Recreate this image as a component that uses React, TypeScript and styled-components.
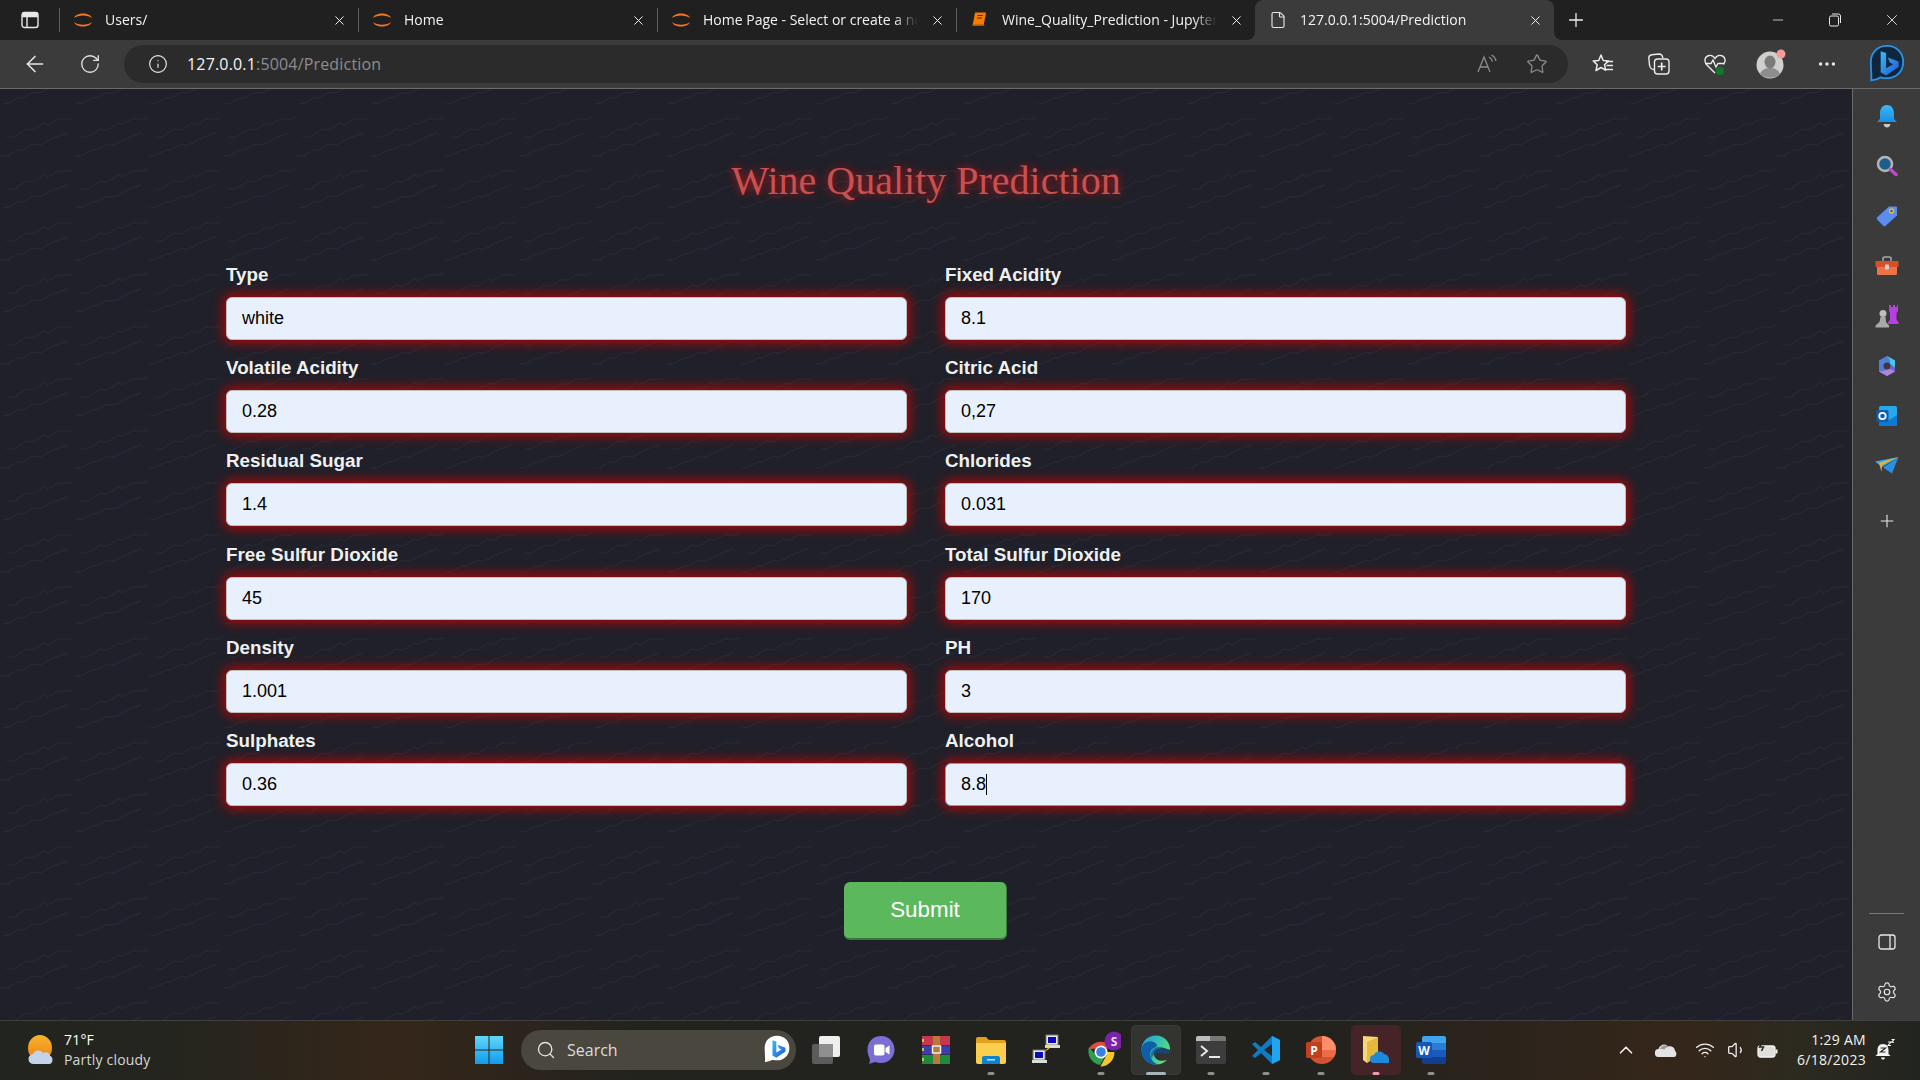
import React, { FC, ReactNode } from "react";
import styled, { createGlobalStyle } from "styled-components";
import {
  ArrowLeft,
  ChevronUp,
  File,
  Info,
  Minus,
  MoreHorizontal,
  Plus,
  RotateCw,
  Search,
  Settings,
  Star,
  Volume1,
  Wifi,
  X,
} from "lucide-react";

const waveTile = encodeURIComponent(
  `<svg xmlns="http://www.w3.org/2000/svg" width="74" height="52"><g fill="none" stroke="#292a35" stroke-width="1" stroke-linecap="round"><path d="M7 48 Q13 49 17 46 T26 40 Q31 42 35 40 T44 34 Q49 37 53 33 T63 30 T73 29"/><path d="M2 15 Q8 15 11 13 T18 9 Q24 10 28 6 T37 4 Q42 4 46 1 T56 -4 T67 -8"/><path d="M2 67 Q8 67 11 65 T18 61 Q24 62 28 58 T37 56 Q42 56 46 53 T56 48 T67 44"/></g></svg>`
);

const GlobalStyle = createGlobalStyle`
  html, body {
    margin: 0;
    padding: 0;
    background: #1f2029;
  }
  * {
    box-sizing: border-box;
  }
`;

const Screen = styled.div`
  width: 1920px;
  height: 1080px;
  display: flex;
  flex-direction: column;
  overflow: hidden;
  font-family: "Open Sans", "Noto Sans", sans-serif;
  color: #fff;
`;

/* ---- tab strip ---- */

const TabStrip = styled.div`
  height: 40px;
  flex: none;
  display: flex;
  background: #3b3b3b;
`;

const LeftGroup = styled.div`
  display: flex;
  align-items: center;
  background: #202020;
  border-bottom-right-radius: 8px;
`;

const TabsButton = styled.div`
  width: 59px;
  display: flex;
  justify-content: center;
`;

const ActiveShell = styled.div`
  background: #202020;
`;

const RightGroup = styled.div`
  flex: 1;
  display: flex;
  align-items: center;
  background: #202020;
  border-bottom-left-radius: 8px;
`;

const TabDivider = styled.div`
  width: 1px;
  height: 24px;
  background: #5f5f5f;
`;

const Tab = styled.div<{ $active?: boolean }>`
  width: ${(p) => (p.$active ? "299px" : "298px")};
  height: 40px;
  display: flex;
  align-items: center;
  padding: 0 11px 0 13px;
  background: ${(p) => (p.$active ? "#3b3b3b" : "transparent")};
  border-radius: 8px 8px 0 0;
`;

const TabIcon = styled.div`
  width: 20px;
  height: 20px;
  flex: none;
  display: flex;
  align-items: center;
  justify-content: center;
  margin-right: 12px;
`;

const TabTitle = styled.div`
  flex: 1;
  min-width: 0;
  overflow: hidden;
  white-space: nowrap;
  font-size: 14px;
  line-height: 20px;
  color: #f2f2f2;
  mask-image: linear-gradient(to left, transparent 0, #000 24px);
  margin-right: 12px;
`;

const NewTab = styled.div`
  width: 44px;
  display: flex;
  justify-content: center;
`;

const WindowControls = styled.div`
  margin-left: auto;
  display: flex;
`;

const WindowButton = styled.div`
  width: 57px;
  height: 40px;
  display: flex;
  align-items: center;
  justify-content: center;
`;

/* ---- toolbar ---- */

const Toolbar = styled.div`
  height: 49px;
  flex: none;
  display: flex;
  align-items: flex-start;
  padding: 5px 0 0 12px;
  background: #3b3b3b;
  border-bottom: 1px solid #6a6a6a;
`;

const NavButton = styled.div`
  width: 45px;
  height: 38px;
  margin-right: 10px;
  display: flex;
  align-items: center;
  justify-content: center;
  flex: none;
`;

const AddressBar = styled.div`
  width: 1444px;
  height: 38px;
  margin-left: 2px;
  flex: none;
  display: flex;
  align-items: center;
  padding: 0 20px 0 24px;
  background: #2b2b2b;
  border-radius: 19px;
`;

const Url = styled.div`
  margin-left: 19px;
  font-size: 16px;
  letter-spacing: 0.17px;
  color: #f4f4f4;
  span {
    color: #8d8d8d;
  }
`;

const AddressActions = styled.div`
  margin-left: auto;
  display: flex;
  align-items: center;
  gap: 28px;
`;

const ToolGroup = styled.div`
  margin-left: 7px;
  display: flex;
`;

const ToolButton = styled.div`
  width: 56px;
  height: 38px;
  display: flex;
  align-items: center;
  justify-content: center;
`;

const BingSlot = styled(ToolButton)`
  margin-left: 4px;
`;

/* ---- page ---- */

const Middle = styled.div`
  flex: 1;
  min-height: 0;
  display: flex;
`;

const Page = styled.main`
  flex: 1;
  min-width: 0;
  padding: 69px 226px 0;
  background-color: #1f2029;
  background-image: url("data:image/svg+xml,${waveTile}");
  background-size: 74px 52px;
`;

const Title = styled.h1`
  margin: 0 0 60px;
  font-family: "Liberation Serif", serif;
  font-size: 40px;
  line-height: 45px;
  padding-bottom: 1px;
  font-weight: 400;
  text-align: center;
  color: #c85050;
  text-shadow: 0 0 10px rgba(215, 20, 20, 0.9);
`;

const FormGrid = styled.form`
  display: grid;
  grid-template-columns: 681px 681px;
  column-gap: 38px;
  row-gap: 17.2px;
`;

const Field = styled.div`
  display: flex;
  flex-direction: column;
`;

const Label = styled.label`
  height: 22px;
  margin-bottom: 11px;
  font-family: "Liberation Sans", Arial, sans-serif;
  font-size: 18.8px;
  line-height: 22px;
  font-weight: 700;
  color: #f0f0f0;
`;

const InputWrap = styled.div`
  position: relative;
`;

const Input = styled.input<{ $focused?: boolean }>`
  display: block;
  width: 100%;
  height: 43px;
  padding: 0 15px;
  font-family: "Liberation Sans", Arial, sans-serif;
  font-size: 18px;
  color: #000;
  background: #e8f0fe;
  border: 1px solid ${(p) => (p.$focused ? "#6f9fd8" : "#bdbdbd")};
  border-radius: 6px;
  outline: none;
  caret-color: transparent;
  box-shadow: 0 0 12px 3px rgba(205, 0, 0, 0.8);
`;

const Caret = styled.span`
  position: absolute;
  left: 41px;
  top: 11px;
  width: 1px;
  height: 21px;
  background: #000;
`;

const SubmitRow = styled.div`
  margin-top: 76px;
  display: flex;
  justify-content: center;
`;

const SubmitButton = styled.button`
  width: 163px;
  height: 58px;
  margin-right: 1px;
  font-family: "Liberation Sans", Arial, sans-serif;
  font-size: 22.4px;
  color: #fff;
  background: #5cb85c;
  border: none;
  border-right: 1px solid #3e7f3e;
  border-bottom: 2px solid #3a773a;
  border-radius: 6px;
`;

/* ---- edge sidebar ---- */

const Sidebar = styled.aside`
  width: 68px;
  flex: none;
  display: flex;
  flex-direction: column;
  align-items: center;
  padding-top: 2px;
  background: #3b3b3b;
  border-left: 1px solid #6a6a6a;
`;

const SideItem = styled.div`
  width: 100%;
  height: 50px;
  display: flex;
  align-items: center;
  justify-content: center;
`;

const SideAdd = styled(SideItem)`
  margin-top: 5px;
`;

const SideFooter = styled.div`
  margin-top: auto;
  width: 100%;
  display: flex;
  flex-direction: column;
  align-items: center;
  padding-bottom: 3px;
`;

const SideRule = styled.div`
  width: 35px;
  height: 1px;
  margin-bottom: 3px;
  background: #777;
`;

/* ---- taskbar ---- */

const Taskbar = styled.footer`
  height: 60px;
  flex: none;
  display: flex;
  align-items: center;
  padding-bottom: 2px;
  border-top: 1px solid #3f3f3f;
  background: linear-gradient(
    90deg,
    #22241f 0,
    #25251e 180px,
    #35261a 390px,
    #23231e 640px,
    #21221e 1300px,
    #35261a 1680px,
    #2c2a20 1800px,
    #22241f 1920px
  );
`;

const Weather = styled.div`
  width: 461px;
  flex: none;
  display: flex;
  align-items: center;
  gap: 9px;
  padding-left: 27px;
`;

const WeatherText = styled.div`
  font-size: 14px;
  line-height: 20px;
  letter-spacing: 0.2px;
  div + div {
    color: #d6d6d6;
  }
`;

const SearchPill = styled.div`
  width: 275px;
  height: 40px;
  margin: 0 2px 0 5px;
  flex: none;
  display: flex;
  align-items: center;
  padding: 0 6px 0 15px;
  background: #4a473f;
  border-radius: 20px;
  font-size: 16px;
  color: #dcdcdc;
`;

const SearchLabel = styled.span`
  margin-left: 11px;
  margin-right: auto;
`;

const Slot = styled.div<{ $active?: boolean; $tone?: string }>`
  position: relative;
  width: 50px;
  height: 50px;
  margin: 0 2.5px;
  flex: none;
  display: flex;
  align-items: center;
  justify-content: center;
  border-radius: 5px;
  background: ${(p) => p.$tone ?? "transparent"};
  ${(p) => p.$active && "box-shadow: inset 0 0 0 1px #3a3b37;"}
`;

const Pip = styled.span<{ $wide?: boolean; $pink?: boolean }>`
  position: absolute;
  bottom: 0;
  left: 50%;
  transform: translateX(-50%);
  width: ${(p) => (p.$wide ? "20px" : "7px")};
  height: 3px;
  border-radius: 2px;
  background: ${(p) => (p.$pink ? "#f29aa6" : p.$wide ? "#a6b4b8" : "#8f8f8f")};
`;

const Tray = styled.div`
  margin-left: auto;
  display: flex;
  align-items: center;
`;

const TrayIcon = styled.div<{ $w: number }>`
  width: ${(p) => p.$w}px;
  display: flex;
  justify-content: center;
`;

const Clock = styled.div`
  width: 80px;
  text-align: right;
  font-size: 14px;
  line-height: 20px;
  color: #f2f2f2;
  letter-spacing: 0.3px;
`;

const BellWrap = styled.div`
  width: 54px;
  padding-right: 16px;
  display: flex;
  justify-content: center;
`;

/* ---- drawn icons ---- */

const JupyterIcon: FC = () => (
  <svg width="20" height="20" viewBox="0 0 20 20">
    <path d="M1 8 C3 2 17 2 19 8 C15 4.5 5 4.5 1 8Z" fill="#f37726" />
    <path d="M1 12 C3 18 17 18 19 12 C15 15.5 5 15.5 1 12Z" fill="#f37726" />
  </svg>
);

const NotebookIcon: FC = () => (
  <svg width="18" height="18" viewBox="0 0 18 18">
    <path d="M4 1.5h11l-2.5 13.5H1.5z" fill="#f57c00" />
    <path d="M2 15h11l.5-1.5h-11z" fill="#a85400" />
    <path d="M6.5 4.5h5.5M6 7h5" stroke="#5a2c00" strokeWidth="1" />
  </svg>
);

const TabsIcon: FC = () => (
  <svg width="18" height="18" viewBox="0 0 18 18" fill="none" stroke="#e8e8e8" strokeWidth="1.4">
    <rect x="1" y="1.5" width="16" height="15" rx="2.5" />
    <path d="M1.5 5.5h15M6 5.5v10.5" />
    <path d="M2 2.2h14v3H2z" fill="#e8e8e8" />
  </svg>
);

const RestoreIcon: FC = () => (
  <svg width="14" height="14" viewBox="0 0 14 14" fill="none" stroke="#e8e8e8" strokeWidth="1">
    <rect x="1.5" y="3" width="9" height="10" rx="1.5" />
    <path d="M4 1h6.5A2 2 0 0 1 12.5 3v7" />
  </svg>
);

const ReadAloudIcon: FC = () => (
  <svg width="22" height="22" viewBox="0 0 22 22" fill="none" stroke="#8c8c8c" strokeWidth="1.3">
    <path d="M2 19 L8 4 L14 19M4 14h8" />
    <path d="M13 4c2 1 3 2.5 3.5 4.5M15.5 2c2.5 1.2 4 3.5 4.5 6" />
  </svg>
);

const FavListIcon: FC = () => (
  <svg width="24" height="24" viewBox="0 0 24 24" fill="none" stroke="#ececec" strokeWidth="1.5">
    <path d="M10 3l2.2 5.5 5.3.4-4 3.8 1.2 5.5-4.7-2.7L5 18.5l1.2-5.8-4-3.8 5.5-.4z" strokeLinejoin="round" />
    <path d="M15 9.5h7M15.5 13.5h6.5M13 17.5h9" />
  </svg>
);

const CollectionsIcon: FC = () => (
  <svg width="24" height="24" viewBox="0 0 24 24" fill="none" stroke="#ececec" strokeWidth="1.4">
    <path d="M7 17.5C4 17.5 3 16 2.5 13L1.8 6c0-2 1-3 3-3.2L12 2c2.5 0 3.5 1.5 3.8 4" />
    <rect x="7.5" y="7" width="14.5" height="15" rx="3" />
    <path d="M14.7 10.5v8M10.7 14.5h8" strokeWidth="1.7" />
  </svg>
);

const HealthIcon: FC = () => (
  <svg width="24" height="24" viewBox="0 0 24 24" fill="none">
    <path
      d="M12 21L3.5 12.5C1 9.5 1.5 5.5 4.5 4c3-1.5 6 0 7.5 2.5C13.5 4 16.5 2.5 19.5 4c3 1.5 3.5 5.5 1 8.5"
      stroke="#ececec"
      strokeWidth="1.4"
    />
    <path d="M2 11.5h6l2-3.5 3 7 2-3.5h6" stroke="#ececec" strokeWidth="1.4" />
    <circle cx="17" cy="19" r="4" fill="#0f7b2a" />
  </svg>
);

const AvatarIcon: FC = () => (
  <svg width="30" height="30" viewBox="0 0 30 30">
    <circle cx="14" cy="16" r="13.5" fill="#cfcfcc" />
    <ellipse cx="14" cy="13" rx="5.5" ry="6.5" fill="#7b7b7b" />
    <path d="M4 25c2-5 6-6 10-6s8 1 10 6c-5 5-15 5-20 0z" fill="#8d8d8d" />
    <circle cx="25" cy="5" r="4.5" fill="#f79a9a" />
  </svg>
);

const BingMark: FC<{ size: number }> = ({ size }) => (
  <svg width={size} height={size * 1.1} viewBox="0 0 40 44">
    <defs>
      <linearGradient id={`bing${size}`} x1="0" y1="0" x2="1" y2="1">
        <stop offset="0" stopColor="#37bdf2" />
        <stop offset="1" stopColor="#2456d8" />
      </linearGradient>
    </defs>
    <path
      d="M20 2C9 2 2 10 2 20c0 6 1 13 .5 20.5C8 40 11 38.5 13 37c2 .7 4.5 1 7 1 11 0 18-8 18-18S31 2 20 2z"
      fill={size > 26 ? "#10263c" : "#fff"}
      stroke={size > 26 ? "#2a93e6" : "#fff"}
      strokeWidth="2"
    />
    <path
      d="M13 8l6 2v17l8-4.5-4-2-2-5.5 12 4.5v6L19 35l-6-3.5z"
      fill={`url(#bing${size})`}
    />
  </svg>
);

const BellIcon: FC = () => (
  <svg width="24" height="26" viewBox="0 0 24 26">
    <defs>
      <linearGradient id="bell" x1="0" y1="0" x2="0" y2="1">
        <stop offset="0" stopColor="#3bb8f5" />
        <stop offset="1" stopColor="#1a8fe3" />
      </linearGradient>
    </defs>
    <path d="M12 2c5 0 7 4 7 9v5l3 3H2l3-3v-5c0-5 2-9 7-9z" fill="url(#bell)" />
    <path d="M8.5 21h7c-.5 2.5-2 3.5-3.5 3.5S9 23.5 8.5 21z" fill="#c9c9c9" />
  </svg>
);

const DiscoverIcon: FC = () => (
  <svg width="22" height="22" viewBox="0 0 22 22">
    <circle cx="9" cy="9" r="7" fill="#1f5d8a" stroke="#b4b4b4" strokeWidth="2.5" />
    <path d="M14.5 14.5l5.5 5" stroke="#c644d8" strokeWidth="3.5" strokeLinecap="round" />
  </svg>
);

const TagIcon: FC = () => (
  <svg width="22" height="22" viewBox="0 0 22 22">
    <path d="M13 1.5h7a1 1 0 0 1 1 1v8L10 20.5a2 2 0 0 1-3 0L1.5 15a2 2 0 0 1 0-3z" fill="#5b8cf0" />
    <circle cx="15.5" cy="6" r="2" fill="#3b5bb0" stroke="#f2c21a" strokeWidth="1.3" />
  </svg>
);

const ToolboxIcon: FC = () => (
  <svg width="24" height="20" viewBox="0 0 24 20">
    <path d="M8 5V2.5C8 1.5 9 1 10 1h4c1 0 2 .5 2 1.5V5" fill="none" stroke="#a9a9a9" strokeWidth="1.5" />
    <rect x="0.5" y="5" width="23" height="6" fill="#d64f26" />
    <path d="M2 11h20v6.5a1.5 1.5 0 0 1-1.5 1.5h-17A1.5 1.5 0 0 1 2 17.5z" fill="#ea7448" />
    <rect x="10" y="8.5" width="4" height="5" rx="1" fill="#cfcfcf" />
  </svg>
);

const GamesIcon: FC = () => (
  <svg width="24" height="24" viewBox="0 0 24 24">
    <path d="M14 1h2v2h2V1h2v2h2V1h1v6l-1.5 2v7l2 2v2H13v-2l2-2V9l-1-2z" fill="#b640e6" />
    <circle cx="8" cy="9.5" r="3.5" fill="#bdbdbd" />
    <path d="M5.5 13h5l.5 5 3 3.5v2H0.5v-2l4-3.5z" fill="#a9a9a9" />
  </svg>
);

const CopilotIcon: FC = () => (
  <svg width="22" height="22" viewBox="0 0 22 22">
    <defs>
      <linearGradient id="m365a" x1="0" y1="0" x2="1" y2="1">
        <stop offset="0" stopColor="#3e8fe0" />
        <stop offset="1" stopColor="#7a56c8" />
      </linearGradient>
    </defs>
    <path d="M11 1l8 4.5v11L11 21l-8-4.5v-11z" fill="url(#m365a)" />
    <path d="M11 1l8 4.5v7l-5-3.5V5z" fill="#45c8ea" />
    <path d="M3 16.5l8 4.5 8-4.5-6-3-5 2.5z" fill="#b084dc" />
    <circle cx="11" cy="11" r="3.5" fill="#3b3b3b" />
  </svg>
);

const OutlookIcon: FC = () => (
  <svg width="22" height="22" viewBox="0 0 22 22">
    <rect x="3" y="1" width="18" height="20" rx="1.5" fill="#28a8ea" />
    <path d="M3 11l9 5 9-6v10a1 1 0 0 1-1 1H4a1 1 0 0 1-1-1z" fill="#0f78d4" />
    <rect x="0.5" y="5" width="12" height="12" rx="1.5" fill="#0a5fb0" />
    <circle cx="6.5" cy="11" r="3.2" fill="none" stroke="#fff" strokeWidth="1.8" />
  </svg>
);

const SendIcon: FC = () => (
  <svg width="24" height="18" viewBox="0 0 24 18">
    <path d="M0 4.5L23.5 0 7 10z" fill="#38aef0" />
    <path d="M23.5 0L17 16.5l-9-6z" fill="#2b8fe0" />
    <path d="M4 6L23.5 0 7 8l-.5 7z" fill="#f4b020" />
  </svg>
);

const PanelIcon: FC = () => (
  <svg width="18" height="16" viewBox="0 0 18 16" fill="none" stroke="#e8e8e8" strokeWidth="1.3">
    <rect x="1" y="1" width="16" height="14" rx="2.5" />
    <path d="M12 1v14" />
  </svg>
);

const WeatherIcon: FC = () => (
  <svg width="28" height="30" viewBox="0 0 28 30">
    <defs>
      <linearGradient id="sun" x1="0" y1="0" x2="0" y2="1">
        <stop offset="0" stopColor="#f7b52b" />
        <stop offset="1" stopColor="#ee7f16" />
      </linearGradient>
    </defs>
    <ellipse cx="13" cy="13" rx="12" ry="13" fill="url(#sun)" />
    <path d="M7 29a5 5 0 0 1-1-10c1-4 8-5 10-1 3-2 7 0 7 3 3 0 4 8-1 8z" fill="#c3d4ea" />
  </svg>
);

const WindowsIcon: FC = () => (
  <svg width="30" height="30" viewBox="0 0 30 30">
    <defs>
      <linearGradient id="win" x1="0" y1="0" x2="0" y2="1">
        <stop offset="0" stopColor="#62d6f6" />
        <stop offset="1" stopColor="#0f9cf0" />
      </linearGradient>
    </defs>
    <path d="M1 1h13.5v13.5H1zM15.5 1H29v13.5H15.5zM1 15.5h13.5V29H1zM15.5 15.5H29V29H15.5z" fill="url(#win)" />
  </svg>
);

const TaskViewIcon: FC = () => (
  <svg width="30" height="30" viewBox="0 0 30 30">
    <rect x="1" y="9" width="21" height="20" rx="2" fill="#5c5c5c" />
    <rect x="8" y="1" width="21" height="21" rx="2" fill="#efefef" />
    <rect x="8" y="9" width="14" height="13" fill="#8f8f8f" />
  </svg>
);

const ChatIcon: FC = () => (
  <svg width="30" height="30" viewBox="0 0 30 30">
    <path d="M15 1c8 0 13.5 6 13.5 13.5S23 28 15 28c-2 0-4-.5-6-1l-6 2c1-2 1.5-4 0-7-1-2-1.5-5-1.5-7.5C1.5 7 7 1 15 1z" fill="#7b6fd6" />
    <rect x="8" y="9.5" width="10.5" height="11" rx="2" fill="#fff" />
    <path d="M19.5 13l4-2.5v9l-4-2.5z" fill="#fff" />
  </svg>
);

const RarIcon: FC = () => (
  <svg width="30" height="30" viewBox="0 0 30 30">
    <rect x="1" y="1" width="28" height="9" fill="#c43a4a" />
    <rect x="1" y="10.5" width="28" height="9" fill="#3d3fa8" />
    <rect x="1" y="20" width="28" height="9" fill="#1f8a3a" />
    <rect x="12" y="1" width="7" height="28" fill="#b87a3a" />
    <rect x="11.5" y="11" width="8" height="7" fill="none" stroke="#eee" strokeWidth="1.5" />
    <path d="M2 4v3M2 13v3M2 23v3" stroke="#f2d65c" strokeWidth="1.5" />
  </svg>
);

const FolderIcon: FC = () => (
  <svg width="30" height="28" viewBox="0 0 30 28">
    <path d="M0 3a2 2 0 0 1 2-2h8l3 3h15a2 2 0 0 1 2 2v4H0z" fill="#e0a21c" />
    <path d="M0 7h30v19a2 2 0 0 1-2 2H2a2 2 0 0 1-2-2z" fill="#fbcf4e" />
    <path d="M8 20h14a2 2 0 0 1 2 2v6H6v-6a2 2 0 0 1 2-2z" fill="#0f82cf" />
    <rect x="11" y="23" width="8" height="1.5" fill="#bfe4fa" />
  </svg>
);

const PuttyIcon: FC = () => (
  <svg width="30" height="32" viewBox="0 0 30 32">
    <rect x="15" y="1" width="12" height="10" fill="#e8e8e8" stroke="#777" />
    <rect x="17" y="3" width="8" height="6" fill="#0a0ab8" />
    <rect x="14" y="11" width="15" height="3" fill="#dcdcdc" />
    <rect x="2" y="16" width="12" height="10" fill="#e8e8e8" stroke="#777" />
    <rect x="4" y="18" width="8" height="6" fill="#0a0ab8" />
    <rect x="1" y="26" width="15" height="3" fill="#dcdcdc" />
    <path d="M19 9l-5 5 3 0-6 6 9-7-3 0 3-4z" fill="#f5e11e" />
  </svg>
);

const ChromeIcon: FC = () => (
  <svg width="40" height="38" viewBox="-4 0 40 38">
    <path d="M3.7 14A14 14 0 0 1 28 13.5H16z" fill="#e24a3b" transform="translate(0 4)" />
    <path d="M29.4 18a14 14 0 0 1-14 14.5l6-11-1.5-3.5z" fill="#f7c52d" transform="translate(0 3)" />
    <path d="M4 16a14 14 0 0 0 11 18l6-10-10 0z" fill="#2e9e50" />
    <circle cx="16" cy="21" r="6.5" fill="#fff" />
    <circle cx="16" cy="21" r="4.8" fill="#3b7ee8" />
    <circle cx="29" cy="10" r="9.5" fill="#7a22a8" />
    <text x="29" y="14.5" fontSize="12" fontWeight="700" textAnchor="middle" fill="#e9d8f5" fontFamily="Open Sans, sans-serif">S</text>
  </svg>
);

const EdgeIcon: FC = () => (
  <svg width="30" height="30" viewBox="0 0 30 30">
    <defs>
      <linearGradient id="edgeA" x1="0" y1="0" x2="1" y2="0.6">
        <stop offset="0" stopColor="#1f9be0" />
        <stop offset="0.6" stopColor="#38c7a6" />
        <stop offset="1" stopColor="#6fdc6a" />
      </linearGradient>
    </defs>
    <path d="M15 .5C6 .5.5 7 .5 15c0 8 6 14.5 14.5 14.5 4 0 8-1.5 11-4.5-6 2-12 0-13-5-1-4 3-7 8-7 4 0 8 2 8 2C29.5 7 23 .5 15 .5z" fill="url(#edgeA)" />
    <path d="M.5 15C1 8 7 5.5 11 6.5c4 1 6 4 4.5 5-5 2-7 5-6 10 1 4 4 7 8 8C8 31 0 24 .5 15z" fill="#0e5fa8" />
    <path d="M11 24c-3-6 1-12 7-12 5 0 8 2 11 5 0 2-2 2-4 2-6-2-14-1-14 5z" fill="#0b4f8e" opacity="0.7" />
  </svg>
);

const TerminalIcon: FC = () => (
  <svg width="30" height="28" viewBox="0 0 30 28">
    <rect width="30" height="28" rx="2" fill="#3d3d3d" />
    <path d="M0 2a2 2 0 0 1 2-2h12v5H0z" fill="#bdbdbd" />
    <path d="M14 0h14a2 2 0 0 1 2 2v3H14z" fill="#777" />
    <path d="M5 10l6 5-6 5" fill="none" stroke="#e8e8e8" strokeWidth="2" />
    <path d="M13 21h11" stroke="#e8e8e8" strokeWidth="2" />
  </svg>
);

const VsCodeIcon: FC = () => (
  <svg width="30" height="30" viewBox="0 0 30 30">
    <path d="M21 1l8 4v20l-8 4-11-11-6 5-3-2 6-6-6-6 3-2 6 5z" fill="#0f7ac6" />
    <path d="M21 1l8 4v20l-8 4z" fill="#22a5f0" />
    <path d="M21 9l-8 6 8 6z" fill="#272822" />
  </svg>
);

const PowerPointIcon: FC = () => (
  <svg width="30" height="30" viewBox="0 0 30 30">
    <circle cx="16" cy="15" r="14" fill="#d35230" />
    <path d="M16 1a14 14 0 0 1 14 14H16z" fill="#ff8f6b" />
    <path d="M16 15h14a14 14 0 0 1-2 7H16z" fill="#ed6c47" />
    <rect x="0" y="7" width="16" height="16" rx="1.5" fill="#c43e1c" />
    <text x="8" y="20" fontSize="12" fontWeight="700" textAnchor="middle" fill="#fff" fontFamily="Open Sans, sans-serif">P</text>
  </svg>
);

const OneDriveFolderIcon: FC = () => (
  <svg width="28" height="30" viewBox="0 0 28 30">
    <path d="M1 1l15 1v18L5 28 1 25z" fill="#f5d77a" />
    <path d="M5 7l11-5v18L5 28z" fill="#e6b93c" />
    <path d="M12 28a4 4 0 0 1 0-8c1-4 8-5 10-1 3 0 6 3 5 9z" fill="#1c8ad8" />
  </svg>
);

const WordIcon: FC = () => (
  <svg width="30" height="28" viewBox="0 0 30 28">
    <path d="M8 0h20a2 2 0 0 1 2 2v5H6V2a2 2 0 0 1 2-2z" fill="#41a5ee" />
    <rect x="6" y="7" width="24" height="7" fill="#2b7cd3" />
    <rect x="6" y="14" width="24" height="7" fill="#185abd" />
    <path d="M6 21h24v5a2 2 0 0 1-2 2H8a2 2 0 0 1-2-2z" fill="#103f91" />
    <rect x="0" y="6" width="16" height="16" rx="1.5" fill="#1358b8" />
    <text x="8" y="19" fontSize="12" fontWeight="700" textAnchor="middle" fill="#fff" fontFamily="Open Sans, sans-serif">W</text>
  </svg>
);

const OneDriveTray: FC = () => (
  <svg width="22" height="14" viewBox="0 0 22 14">
    <path d="M4 14a4 4 0 0 1-.5-8C5 1 11 0 13 3.5 17 2.5 20 5 20 8c2 1 2 6-1 6z" fill="#e4e4e4" />
    <path d="M5 6c1-4 7-5 8-2-2 .5-3 1.5-3.5 2.5C8 6 6.5 6 5 6z" fill="#9a9a9a" />
  </svg>
);

const BatteryIcon: FC = () => (
  <svg width="22" height="18" viewBox="0 0 22 18" fill="none" stroke="#f2f2f2" strokeWidth="1.3">
    <rect x="1" y="5" width="17" height="11" rx="2.5" fill="#f2f2f2" fillOpacity="0.9" />
    <path d="M19.5 8.5v4" strokeWidth="2" />
    <path d="M6 0L2.5 6h4L4.5 10" stroke="#2c241c" strokeWidth="1.5" />
  </svg>
);

const SnoozeBell: FC = () => (
  <svg width="20" height="22" viewBox="0 0 20 22">
    <path d="M8 5c4 0 5.5 3 5.5 6v4l2 2H.5l2-2v-4C2.5 8 4 5 8 5z" fill="#f4f4f4" />
    <path d="M6 18.5h4c-.3 1.5-1 2-2 2s-1.7-.5-2-2z" fill="#f4f4f4" />
    <path d="M5.5 9h5l-5 4h5" stroke="#2b2720" strokeWidth="1.2" fill="none" />
    <path d="M13 3h3l-3 3.5h3M16.5 .5h2.5l-2.5 2.7h2.5" stroke="#f4f4f4" strokeWidth="1.1" fill="none" />
  </svg>
);

/* ---- data ---- */

const tabs: { title: string; icon: ReactNode }[] = [
  { title: "Users/", icon: <JupyterIcon /> },
  { title: "Home", icon: <JupyterIcon /> },
  { title: "Home Page - Select or create a notebook", icon: <JupyterIcon /> },
  { title: "Wine_Quality_Prediction - Jupyter Notebook", icon: <NotebookIcon /> },
];

const fields = [
  ["Type", "white"],
  ["Fixed Acidity", "8.1"],
  ["Volatile Acidity", "0.28"],
  ["Citric Acid", "0,27"],
  ["Residual Sugar", "1.4"],
  ["Chlorides", "0.031"],
  ["Free Sulfur Dioxide", "45"],
  ["Total Sulfur Dioxide", "170"],
  ["Density", "1.001"],
  ["PH", "3"],
  ["Sulphates", "0.36"],
  ["Alcohol", "8.8"],
];

const sideIcons = [
  <BellIcon />,
  <DiscoverIcon />,
  <TagIcon />,
  <ToolboxIcon />,
  <GamesIcon />,
  <CopilotIcon />,
  <OutlookIcon />,
  <SendIcon />,
];

const apps: { icon: ReactNode; pip?: "dot" | "wide" | "pink"; active?: boolean; tone?: string }[] = [
  { icon: <TaskViewIcon /> },
  { icon: <ChatIcon /> },
  { icon: <RarIcon /> },
  { icon: <FolderIcon />, pip: "dot" },
  { icon: <PuttyIcon /> },
  { icon: <ChromeIcon />, pip: "dot" },
  { icon: <EdgeIcon />, pip: "wide", active: true, tone: "#33342f" },
  { icon: <TerminalIcon />, pip: "dot" },
  { icon: <VsCodeIcon />, pip: "dot" },
  { icon: <PowerPointIcon />, pip: "dot" },
  { icon: <OneDriveFolderIcon />, pip: "pink", tone: "#442426" },
  { icon: <WordIcon />, pip: "dot" },
];

const App: FC = () => {
  return (
    <Screen>
      <GlobalStyle />
      <TabStrip>
        <LeftGroup>
          <TabsButton>
            <TabsIcon />
          </TabsButton>
          {tabs.map((tab) => (
            <React.Fragment key={tab.title}>
              <TabDivider />
              <Tab>
                <TabIcon>{tab.icon}</TabIcon>
                <TabTitle>{tab.title}</TabTitle>
                <X size={15} color="#f0f0f0" strokeWidth={1.6} />
              </Tab>
            </React.Fragment>
          ))}
        </LeftGroup>
        <ActiveShell>
          <Tab $active>
            <TabIcon>
              <File size={18} color="#e8e8e8" strokeWidth={1.5} />
            </TabIcon>
            <TabTitle>127.0.0.1:5004/Prediction</TabTitle>
            <X size={15} color="#f0f0f0" strokeWidth={1.6} />
          </Tab>
        </ActiveShell>
        <RightGroup>
          <NewTab>
            <Plus size={22} color="#f0f0f0" strokeWidth={1.4} />
          </NewTab>
          <WindowControls>
            <WindowButton>
              <Minus size={16} color="#e8e8e8" strokeWidth={1.2} />
            </WindowButton>
            <WindowButton>
              <RestoreIcon />
            </WindowButton>
            <WindowButton>
              <X size={18} color="#e8e8e8" strokeWidth={1.2} />
            </WindowButton>
          </WindowControls>
        </RightGroup>
      </TabStrip>

      <Toolbar>
        <NavButton>
          <ArrowLeft size={26} color="#e8e8e8" strokeWidth={1.4} />
        </NavButton>
        <NavButton>
          <RotateCw size={22} color="#e8e8e8" strokeWidth={1.4} />
        </NavButton>
        <AddressBar>
          <Info size={20} color="#e8e8e8" strokeWidth={1.4} />
          <Url>
            127.0.0.1<span>:5004/Prediction</span>
          </Url>
          <AddressActions>
            <ReadAloudIcon />
            <Star size={22} color="#8c8c8c" strokeWidth={1.4} />
          </AddressActions>
        </AddressBar>
        <ToolGroup>
          <ToolButton>
            <FavListIcon />
          </ToolButton>
          <ToolButton>
            <CollectionsIcon />
          </ToolButton>
          <ToolButton>
            <HealthIcon />
          </ToolButton>
          <ToolButton>
            <AvatarIcon />
          </ToolButton>
          <ToolButton>
            <MoreHorizontal size={22} color="#e8e8e8" strokeWidth={1.8} />
          </ToolButton>
          <BingSlot>
            <BingMark size={36} />
          </BingSlot>
        </ToolGroup>
      </Toolbar>

      <Middle>
        <Page>
          <Title>Wine Quality Prediction</Title>
          <FormGrid onSubmit={(e) => e.preventDefault()}>
            {fields.map(([label, value], index) => (
              <Field key={label}>
                <Label htmlFor={`field-${index}`}>{label}</Label>
                <InputWrap>
                  <Input
                    id={`field-${index}`}
                    defaultValue={value}
                    $focused={label === "Alcohol"}
                  />
                  {label === "Alcohol" && <Caret />}
                </InputWrap>
              </Field>
            ))}
          </FormGrid>
          <SubmitRow>
            <SubmitButton type="button">Submit</SubmitButton>
          </SubmitRow>
        </Page>
        <Sidebar>
          {sideIcons.map((icon, index) => (
            <SideItem key={index}>{icon}</SideItem>
          ))}
          <SideAdd>
            <Plus size={20} color="#e8e8e8" strokeWidth={1.3} />
          </SideAdd>
          <SideFooter>
            <SideRule />
            <SideItem>
              <PanelIcon />
            </SideItem>
            <SideItem>
              <Settings size={22} color="#e8e8e8" strokeWidth={1.3} />
            </SideItem>
          </SideFooter>
        </Sidebar>
      </Middle>

      <Taskbar>
        <Weather>
          <WeatherIcon />
          <WeatherText>
            <div>71°F</div>
            <div>Partly cloudy</div>
          </WeatherText>
        </Weather>
        <Slot>
          <WindowsIcon />
        </Slot>
        <SearchPill>
          <Search size={20} color="#e4e4e4" strokeWidth={1.6} />
          <SearchLabel>Search</SearchLabel>
          <BingMark size={26} />
        </SearchPill>
        {apps.map((app, index) => (
          <Slot key={index} $active={app.active} $tone={app.tone}>
            {app.icon}
            {app.pip && <Pip $wide={app.pip === "wide"} $pink={app.pip === "pink"} />}
          </Slot>
        ))}
        <Tray>
          <TrayIcon $w={40}>
            <ChevronUp size={22} color="#f2f2f2" strokeWidth={1.8} />
          </TrayIcon>
          <TrayIcon $w={40}>
            <OneDriveTray />
          </TrayIcon>
          <TrayIcon $w={38}>
            <Wifi size={20} color="#f2f2f2" strokeWidth={1.6} />
          </TrayIcon>
          <TrayIcon $w={26}>
            <Volume1 size={20} color="#f2f2f2" strokeWidth={1.5} />
          </TrayIcon>
          <TrayIcon $w={36}>
            <BatteryIcon />
          </TrayIcon>
          <Clock>
            <div>1:29 AM</div>
            <div>6/18/2023</div>
          </Clock>
          <BellWrap>
            <SnoozeBell />
          </BellWrap>
        </Tray>
      </Taskbar>
    </Screen>
  );
};

export default App;
